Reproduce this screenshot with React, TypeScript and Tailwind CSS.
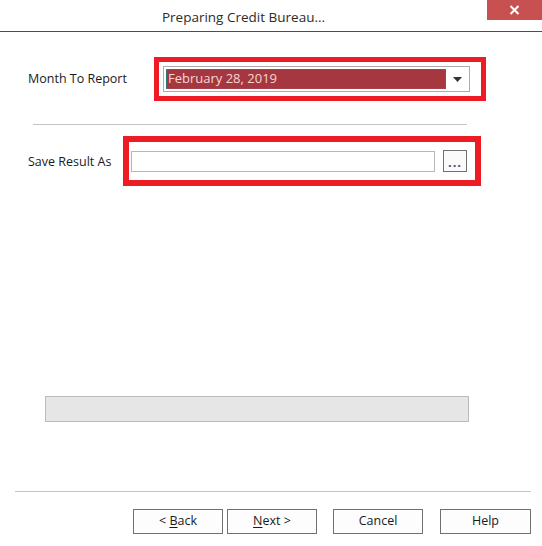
import React from "react";

const font = { fontFamily: '"Open Sans", "Noto Sans", "DejaVu Sans", sans-serif' };

function Btn({ children, w = "w-[90px]" }: { children: React.ReactNode; w?: string }) {
  return (
    <div
      className={`${w} h-[25px] border border-[#707070] bg-[#fdfdfd] flex items-center justify-center text-[12.5px] text-[#1a1a1a]`}
    >
      {children}
    </div>
  );
}

export default function App() {
  return (
    <div className="w-[542px] h-[546px] bg-white overflow-hidden flex flex-col" style={font}>
      {/* Title bar */}
      <div className="h-[32px] border-b border-[#a8234a] flex shrink-0">
        <div className="flex-1 flex items-center justify-center">
          <span className="text-[13.5px] text-[#2b2b2b] pt-[3px]">Preparing Credit Bureau...</span>
        </div>
        <div className="w-[55px] h-[20px] bg-[#c75050] flex items-center justify-center">
          <svg width="11" height="10" viewBox="0 0 11 10">
            <path d="M1.5 1 L9.5 9 M9.5 1 L1.5 9" stroke="white" strokeWidth="2" />
          </svg>
        </div>
      </div>

      {/* Row 1 */}
      <div className="flex items-center mt-[25px] pl-[28px]">
        <div className="w-[126px] text-[12.5px] text-[#1a1a1a] pt-[1px]">Month To Report</div>
        <div className="w-[332px] h-[44px] border-[5px] border-[#ed1c24] flex items-center pl-[4px]">
          <div className="w-[307px] h-[26px] border border-[#ababab] bg-white flex items-center pl-[2px]">
            <div className="w-[280px] h-[20px] bg-[#a4373f] outline outline-1 outline-dotted outline-[#3a7f7f] -outline-offset-1 flex items-center pl-[2px] text-[13px] text-[#f6d6d6]">
              February 28, 2019
            </div>
            <div className="flex-1 flex items-center justify-center">
              <svg width="9" height="5" viewBox="0 0 9 5">
                <path d="M0 0 L9 0 L4.5 5 Z" fill="#333" />
              </svg>
            </div>
          </div>
        </div>
      </div>

      {/* Separator */}
      <div className="ml-[33px] w-[434px] h-px bg-[#c4c4c4] mt-[23px]" />

      {/* Row 2 */}
      <div className="flex items-center mt-[11px] pl-[28px]">
        <div className="w-[95px] text-[12.5px] text-[#1a1a1a] pt-[3px]">Save Result As</div>
        <div className="w-[358px] h-[50px] border-[6px] border-[#ed1c24] flex items-center pl-[2px]">
          <div className="w-[304px] h-[21px] border border-[#b4b8bd] bg-white" />
          <div className="ml-[8px] w-[24px] h-[22px] border border-[#707070] bg-[#fafafa] flex items-center justify-center text-[13px] font-bold text-[#4a4a7a] leading-none pt-[3px] tracking-[1px]">
            ...
          </div>
        </div>
      </div>

      {/* Progress bar */}
      <div className="ml-[45px] mt-[210px] w-[424px] h-[26px] border border-[#bcbcbc] bg-[#e6e6e6]" />

      {/* Bottom separator */}
      <div className="ml-[15px] w-[516px] h-px bg-[#c4c4c4] mt-[69px]" />

      {/* Buttons */}
      <div className="flex mt-[17px] pl-[133px]">
        <Btn>
          &lt;&nbsp;<span className="underline underline-offset-2">B</span>ack
        </Btn>
        <div className="ml-[4px]">
          <Btn>
            <span className="underline underline-offset-2">N</span>ext &gt;
          </Btn>
        </div>
        <div className="ml-[16px]">
          <Btn>Cancel</Btn>
        </div>
        <div className="ml-[17px]">
          <Btn w="w-[91px]">Help</Btn>
        </div>
      </div>
    </div>
  );
}
